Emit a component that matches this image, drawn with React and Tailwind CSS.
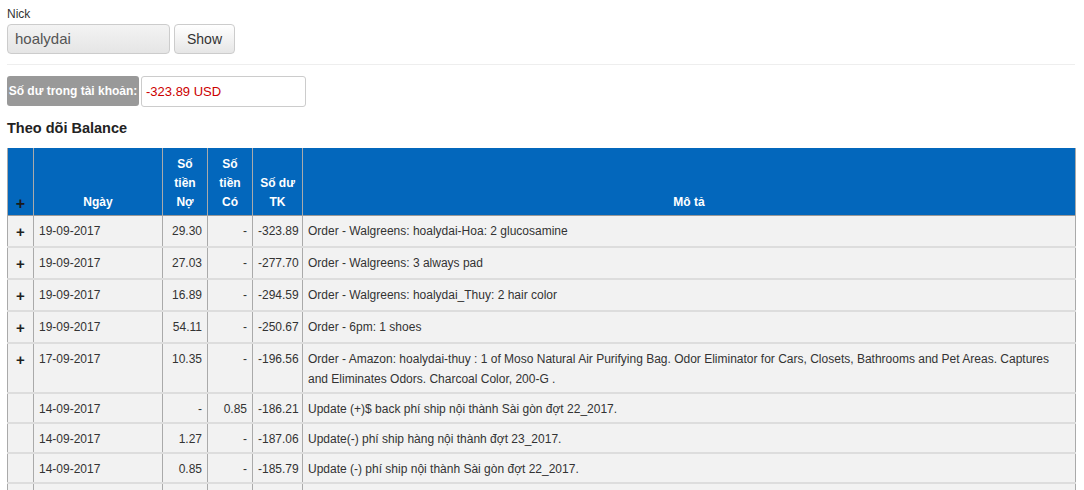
import React from "react";

const rows = [
  { plus: true, date: "19-09-2017", no: "29.30", co: "-", du: "-323.89", desc: "Order - Walgreens: hoalydai-Hoa: 2 glucosamine" },
  { plus: true, date: "19-09-2017", no: "27.03", co: "-", du: "-277.70", desc: "Order - Walgreens: 3 always pad" },
  { plus: true, date: "19-09-2017", no: "16.89", co: "-", du: "-294.59", desc: "Order - Walgreens: hoalydai_Thuy: 2 hair color" },
  { plus: true, date: "19-09-2017", no: "54.11", co: "-", du: "-250.67", desc: "Order - 6pm: 1 shoes" },
  { plus: true, date: "17-09-2017", no: "10.35", co: "-", du: "-196.56", desc: "Order - Amazon: hoalydai-thuy : 1 of Moso Natural Air Purifying Bag. Odor Eliminator for Cars, Closets, Bathrooms and Pet Areas. Captures and Eliminates Odors. Charcoal Color, 200-G ." },
  { plus: false, date: "14-09-2017", no: "-", co: "0.85", du: "-186.21", desc: "Update (+)$ back phí ship nội thành Sài gòn đợt 22_2017." },
  { plus: false, date: "14-09-2017", no: "1.27", co: "-", du: "-187.06", desc: "Update(-) phí ship hàng nội thành đợt 23_2017." },
  { plus: false, date: "14-09-2017", no: "0.85", co: "-", du: "-185.79", desc: "Update (-) phí ship nội thành Sài gòn đợt 22_2017." },
  { plus: false, date: "", no: "", co: "", du: "", desc: "" },
];

export default function App() {
  const font = { fontFamily: '"Liberation Sans", Arial, sans-serif' };
  const th = "border-x border-[#aaaaaa] px-[5px] pt-[7px] pb-[3px] align-bottom text-center font-bold text-white leading-[19px]";
  const td = "border-x border-b-2 border-x-[#aaaaaa] border-b-[#dddddd] px-[5px] pt-[5px] pb-[3px] align-top leading-[20px]";
  return (
    <div style={font} className="h-[490px] overflow-hidden bg-white text-[#333333] pl-[7px] pr-[8px] pt-[6px] text-[12px]">
      <div className="leading-[16px] text-[12px] text-[#333]">Nick</div>
      <div className="mt-[2px] flex gap-[4px]">
        <div className="flex h-[30px] w-[163px] items-center rounded-[4px] border border-[#cccccc] bg-gradient-to-b from-[#f3f3f3] to-[#e5e5e5] pl-[7px] text-[15px] text-[#555555]">
          hoalydai
        </div>
        <button className="h-[30px] w-[61px] rounded-[4px] border border-[#cccccc] bg-gradient-to-b from-white to-[#e6e6e6] text-[14px] text-[#333333]" style={font}>
          Show
        </button>
      </div>
      <div className="mt-[10px] h-px bg-[#eeeeee] mr-[1px]" />
      <div className="mt-[11px] flex items-start gap-[2px]">
        <div className="flex h-[30px] w-[132px] items-center justify-center rounded-[3px] bg-[#999999] text-[12px] font-bold text-white">
          Số dư trong tài khoản:
        </div>
        <div className="flex h-[31px] w-[165px] items-center rounded-[3px] border border-[#cccccc] bg-white pl-[4px] text-[13px] text-[#cc0000]">
          -323.89 USD
        </div>
      </div>
      <div className="mt-[11px] text-[14.5px] font-bold leading-[20px] text-[#222]">Theo dõi Balance</div>
      <table className="mt-[10px] w-[1069px] table-fixed border-collapse border-x border-[#aaaaaa] text-[12px]">
        <colgroup>
          <col className="w-[26px]" />
          <col className="w-[129px]" />
          <col className="w-[45px]" />
          <col className="w-[45px]" />
          <col className="w-[50px]" />
          <col />
        </colgroup>
        <thead>
          <tr className="bg-[#0367bc] border-b border-[#999999]">
            <th className="border-x border-[#aaaaaa] px-0 pb-[2px] align-bottom text-center text-[16px] font-bold leading-[19px] text-[#1a1a1a]">+</th>
            <th className={th}>Ngày</th>
            <th className={th}>Số<br />tiền<br />Nợ</th>
            <th className={th}>Số<br />tiền<br />Có</th>
            <th className={th}>Số dư<br />TK</th>
            <th className={th}>Mô tả</th>
          </tr>
        </thead>
        <tbody>
          {rows.map((r, i) => (
            <tr key={i} className="bg-[#f2f2f2]">
              <td className="border-x border-b-2 border-x-[#aaaaaa] border-b-[#dddddd] px-0 pt-[5px] pb-[3px] align-top text-center text-[15px] font-bold leading-[22px] text-[#222]">
                {r.plus ? "+" : ""}
              </td>
              <td className={td}>{r.date}</td>
              <td className={td + " text-right"}>{r.no}</td>
              <td className={td + " text-right"}>{r.co}</td>
              <td className={td + " text-right"}>{r.du}</td>
              <td className={td}>{r.desc}</td>
            </tr>
          ))}
        </tbody>
      </table>
    </div>
  );
}
